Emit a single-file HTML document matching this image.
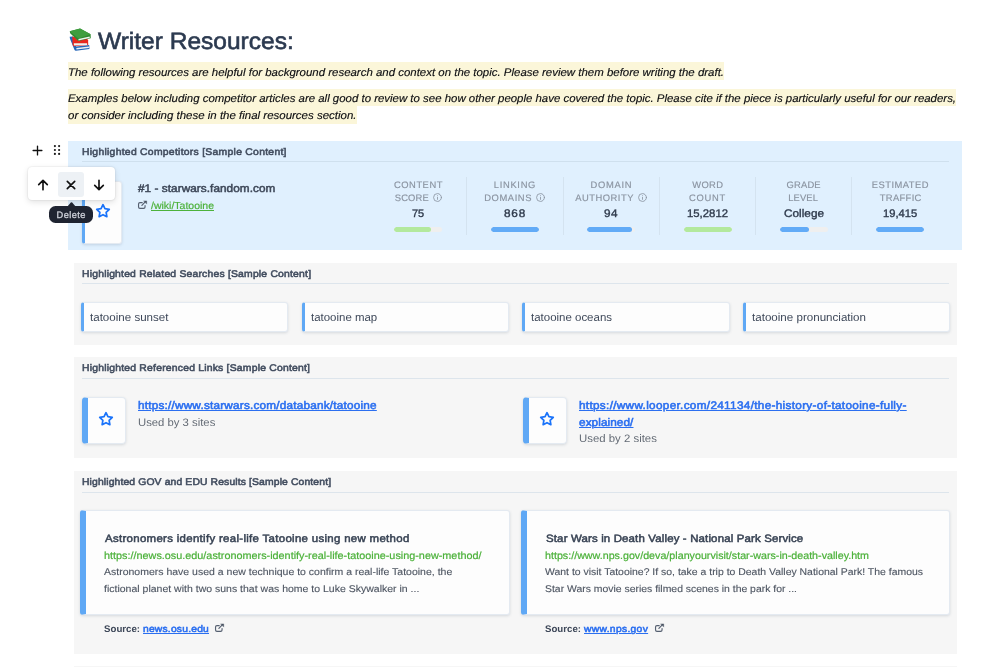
<!DOCTYPE html>
<html lang="en">
<head>
<meta charset="utf-8">
<title>Writer Resources</title>
<style>
*{box-sizing:border-box;margin:0;padding:0}
html,body{width:1000px;height:667px;overflow:hidden;background:#fff}
body{font-family:"Liberation Sans",sans-serif;color:#2d3748;position:relative;text-rendering:geometricPrecision}
#pg{position:absolute;left:0;top:0;width:1000px;height:667px;overflow:hidden;will-change:transform}
.abs{position:absolute;white-space:nowrap}
.hl{position:absolute;background:#fbf6d9}
.it{position:absolute;font-style:italic;color:#0c0d10;-webkit-text-stroke:0.15px #0c0d10;white-space:nowrap}
.sec{position:absolute;background:#f6f6f6}
.sec.blue{background:#e0f0fe}
.sh{position:absolute;color:#434e60;-webkit-text-stroke:0.55px #434e60;white-space:nowrap}
.hr{position:absolute;height:1px;background:#dde5ec}
.card{position:absolute;background:#fdfdfd;border:1px solid #e4eaf1;border-left:3px solid #5fa8f5;border-radius:3px;box-shadow:0 1px 3px rgba(40,60,90,.16)}
.card.w{border-left-width:6px;border-radius:4px}
.lbl{position:absolute;color:#8a93a0;-webkit-text-stroke:0.15px #8a93a0;text-transform:uppercase;white-space:nowrap}
.val{position:absolute;color:#2f3a4c;white-space:nowrap;-webkit-text-stroke:0.36px #2f3a4c}
.bar{position:absolute;height:4.6px;width:48px;border-radius:3px;background:#efefef;overflow:hidden}
.bar i{display:block;height:100%;border-radius:3px}
.vd{position:absolute;width:1px;background:#d4e3f0}
.lnk{color:#2b6ff0;-webkit-text-stroke:0.55px #2b6ff0;text-decoration:underline;text-decoration-thickness:0.8px;text-underline-offset:0.8px}
.grn{color:#4ab038;-webkit-text-stroke:0.2px #4ab038}
.dsc{color:#4d5561;-webkit-text-stroke:0.12px #4d5561}
</style>
</head>
<body>
<div id="pg">

<!-- title -->
<span class="abs" style="left:70px;top:40px;font-size:0;line-height:0">📚</span>
<svg class="abs" style="left:64px;top:24px" width="32" height="32" viewBox="0 0 667 667">
  <path d="M118 268 L185 262 L255 470 L525 440 L530 520 L250 556 Q225 556 215 530 L125 310Z" fill="#2566b8"/>
  <path d="M258 498 L520 468 L520 502 L258 530Z" fill="#eef0f2"/>
  <path d="M172 262 L470 300 Q500 310 502 340 L505 440 L210 462 Q185 462 180 430Z" fill="#e8281e"/>
  <path d="M205 402 L482 400 L482 440 L208 446Z" fill="#eef3f0"/>
  <path d="M120 150 L335 95 L555 212 L558 295 L300 352 Q285 352 275 335 L128 195Z" fill="#2f8a30"/>
  <path d="M120 150 L335 95 L555 212 L300 300Z" fill="#3f9e3e"/>
  <path d="M302 312 L535 262 L535 292 L302 346Z" fill="#eef3ee"/>
</svg>
<h1 class="abs" id="h1" style="top:25.90px;font-size:23.6px;line-height:32px;font-weight:400;color:#2c3a50;-webkit-text-stroke:0.6px #2c3a50;left:98.3px;letter-spacing:0.0px;transform:scaleX(1.0390);transform-origin:0 50%">Writer Resources:</h1>
<div class="hl" style="left:68px;top:62.2px;width:656px;height:17.6px"></div>
<div class="hl" style="left:68px;top:88.6px;width:888px;height:17.7px"></div>
<div class="hl" style="left:68px;top:106.2px;width:288.5px;height:17.6px"></div>
<p class="it" id="p1" style="top:64.51px;font-size:11.1px;line-height:17.6px;left:68.0px;letter-spacing:0.0px;transform:scaleX(1.0318);transform-origin:0 50%">The following resources are helpful for background research and context on the topic. Please review them before writing the draft.</p>
<p class="it" id="p2a" style="top:90.70px;font-size:11.1px;line-height:17.6px;left:68.0px;letter-spacing:-0.0px;transform:scaleX(1.0301);transform-origin:0 50%">Examples below including competitor articles are all good to review to see how other people have covered the topic. Please cite if the piece is particularly useful for our readers,</p>
<p class="it" id="p2b" style="top:108.31px;font-size:11.1px;line-height:17.6px;left:68.0px;letter-spacing:0.0px;transform:scaleX(1.0350);transform-origin:0 50%">or consider including these in the final resources section.</p>

<!-- section 1: competitors (selected) -->
<div class="sec blue" style="left:68px;top:140.5px;width:894px;height:109.8px"></div>
<div class="sh" id="sh1" style="top:145.51px;font-size:9.7px;line-height:14px;left:82.0px;letter-spacing:0.261px;transform:scaleX(1.0700);transform-origin:0 50%">Highlighted Competitors [Sample Content]</div>
<div class="hr" style="left:82px;top:161px;width:867px;background:#cfe0ee"></div>
<div class="card" style="left:81.8px;top:181px;width:40.6px;height:63px"></div>
<svg class="abs" style="left:95.2px;top:203px" width="16" height="16" viewBox="0 0 24 24" fill="none" stroke="#1a73fa" stroke-width="2.6" stroke-linejoin="round"><path d="M12 2.6l2.9 5.9 6.5.95-4.7 4.6 1.1 6.5L12 17.5l-5.8 3.05 1.1-6.5-4.7-4.6 6.5-.95z"/></svg>
<div class="abs" id="c1t" style="top:181.21px;font-size:11px;line-height:16px;color:#3d4758;-webkit-text-stroke:0.5px #3d4758;left:138.0px;letter-spacing:0.051px;transform:scaleX(1.0700);transform-origin:0 50%">#1 - starwars.fandom.com</div>
<svg class="abs" style="left:136.9px;top:200.4px" width="11" height="11" viewBox="0 0 11 11" fill="none" stroke="#566071" stroke-width="1.15" stroke-linecap="round" stroke-linejoin="round"><path d="M5.2 2.65H2.95a1.4 1.4 0 0 0-1.4 1.4v2.9a1.4 1.4 0 0 0 1.4 1.4h3.7a1.4 1.4 0 0 0 1.4-1.4V5.6"/><path d="M4.9 5.3L8.5 1.7" stroke-width="1.2"/><path d="M6.9 .9h2.8v2.8z" fill="#465060" stroke="#465060" stroke-width=".4"/></svg>
<div class="abs grn" id="c1l" style="top:199.71px;font-size:10.2px;line-height:14px;text-decoration:underline;text-decoration-thickness:1px;text-underline-offset:0.6px;-webkit-text-stroke:0.2px #4db23c;left:150.5px;letter-spacing:0.0px;transform:scaleX(1.0301);transform-origin:0 50%">/wiki/Tatooine</div>
<div class="lbl" id="l1a" style="top:177.70px;font-size:9.4px;line-height:13px;left:394.0px;letter-spacing:0.515px">Content</div>
<div class="lbl" id="l1b" style="top:191.41px;font-size:9.4px;line-height:13px;left:394.8px;letter-spacing:0.139px">Score</div>
<div class="val" id="v1" style="top:206.91px;font-size:11px;line-height:15px;left:412.3px;letter-spacing:0.0px;transform:scaleX(0.9959);transform-origin:0 50%">75</div>
<div class="bar" style="left:394.2px;top:227.4px"><i style="width:36.5px;background:#b3e99d"></i></div>
<div class="vd" style="left:466.2px;top:177px;height:57.5px"></div>
<div class="lbl" id="l2a" style="top:177.70px;font-size:9.4px;line-height:13px;left:493.8px;letter-spacing:0.681px">Linking</div>
<div class="lbl" id="l2b" style="top:191.41px;font-size:9.4px;line-height:13px;left:484.2px;letter-spacing:0.589px">Domains</div>
<div class="val" id="v2" style="top:206.91px;font-size:11px;line-height:15px;left:504.2px;letter-spacing:0.774px;transform:scaleX(1.0700);transform-origin:0 50%">868</div>
<div class="bar" style="left:490.7px;top:227.4px"><i style="width:48px;background:#62abf7"></i></div>
<div class="vd" style="left:562.7px;top:177px;height:57.5px"></div>
<div class="lbl" id="l3a" style="top:177.70px;font-size:9.4px;line-height:13px;left:590.5px;letter-spacing:0.72px">Domain</div>
<div class="lbl" id="l3b" style="top:191.41px;font-size:9.4px;line-height:13px;left:575.2px;letter-spacing:0.504px">Authority</div>
<div class="val" id="v3" style="top:206.91px;font-size:11px;line-height:15px;left:604.3px;letter-spacing:0.367px;transform:scaleX(1.0700);transform-origin:0 50%">94</div>
<div class="bar" style="left:586.9px;top:227.4px"><i style="width:45px;background:#62abf7"></i></div>
<div class="vd" style="left:659.2px;top:177px;height:57.5px"></div>
<div class="lbl" id="l4a" style="top:177.70px;font-size:9.4px;line-height:13px;left:692.2px;letter-spacing:0.371px">Word</div>
<div class="lbl" id="l4b" style="top:191.41px;font-size:9.4px;line-height:13px;left:689.0px;letter-spacing:0.714px">Count</div>
<div class="val" id="v4" style="top:206.91px;font-size:11px;line-height:15px;left:686.8px;letter-spacing:0.0px;transform:scaleX(1.0310);transform-origin:0 50%">15,2812</div>
<div class="bar" style="left:683.6px;top:227.4px"><i style="width:48px;background:#b3e99d"></i></div>
<div class="vd" style="left:755.3px;top:177px;height:57.5px"></div>
<div class="lbl" id="l5a" style="top:177.70px;font-size:9.4px;line-height:13px;left:786.6px;letter-spacing:0.164px">Grade</div>
<div class="lbl" id="l5b" style="top:191.41px;font-size:9.4px;line-height:13px;left:788.2px;letter-spacing:0.153px">Level</div>
<div class="val" id="v5" style="top:206.91px;font-size:11px;line-height:15px;left:783.8px;letter-spacing:0.012px;transform:scaleX(1.0700);transform-origin:0 50%">College</div>
<div class="bar" style="left:779.6px;top:227.4px"><i style="width:29px;background:#62abf7"></i></div>
<div class="vd" style="left:851.4px;top:177px;height:57.5px"></div>
<div class="lbl" id="l6a" style="top:177.70px;font-size:9.4px;line-height:13px;left:871.8px;letter-spacing:0.456px">Estimated</div>
<div class="lbl" id="l6b" style="top:191.41px;font-size:9.4px;line-height:13px;left:879.8px;letter-spacing:0.334px">Traffic</div>
<div class="val" id="v6" style="top:206.91px;font-size:11px;line-height:15px;left:883.0px;letter-spacing:0.0px;transform:scaleX(1.0162);transform-origin:0 50%">19,415</div>
<div class="bar" style="left:876.4px;top:227.4px"><i style="width:48px;background:#62abf7"></i></div>
<svg class="abs" style="left:432.8px;top:192.9px" width="9" height="9" viewBox="0 0 24 24" fill="none" stroke="#8d96a3" stroke-width="2.3" stroke-linecap="round"><circle cx="12" cy="12" r="10.5"/><path d="M12 11.5v5.5"/><path d="M12 7.2v.1"/></svg>
<svg class="abs" style="left:536.1px;top:192.9px" width="9" height="9" viewBox="0 0 24 24" fill="none" stroke="#8d96a3" stroke-width="2.3" stroke-linecap="round"><circle cx="12" cy="12" r="10.5"/><path d="M12 11.5v5.5"/><path d="M12 7.2v.1"/></svg>
<svg class="abs" style="left:637.8px;top:192.9px" width="9" height="9" viewBox="0 0 24 24" fill="none" stroke="#8d96a3" stroke-width="2.3" stroke-linecap="round"><circle cx="12" cy="12" r="10.5"/><path d="M12 11.5v5.5"/><path d="M12 7.2v.1"/></svg>

<!-- block toolbar -->
<svg class="abs" style="left:31.6px;top:144.5px" width="11" height="11" viewBox="0 0 12 12" stroke="#111" stroke-width="1.45" stroke-linecap="round"><path d="M6 1.2v9.6M1.2 6h9.6"/></svg>
<svg class="abs" style="left:53.1px;top:144.1px" width="8" height="12" viewBox="0 0 8 12" fill="#1a1a1a"><circle cx="1.9" cy="2.1" r="1.08"/><circle cx="6.1" cy="2.1" r="1.08"/><circle cx="1.9" cy="6" r="1.08"/><circle cx="6.1" cy="6" r="1.08"/><circle cx="1.9" cy="9.9" r="1.08"/><circle cx="6.1" cy="9.9" r="1.08"/></svg>
<div class="abs" style="left:27.9px;top:166.7px;width:86.9px;height:33.3px;background:#fff;border-radius:4px;box-shadow:0 2px 6px rgba(0,0,0,.12),0 0 2px rgba(0,0,0,.14)"></div>
<div class="abs" style="left:58.2px;top:171.8px;width:25.6px;height:25.5px;background:#edf1f5;border-radius:3px"></div>
<svg class="abs" style="left:37px;top:178.7px" width="12" height="12" viewBox="0 0 12 12" fill="none" stroke="#111" stroke-width="1.65" stroke-linecap="round" stroke-linejoin="round"><path d="M6 10.8V1.6M1.7 5.7L6 1.4l4.3 4.3"/></svg>
<svg class="abs" style="left:65.2px;top:178.8px" width="12" height="12" viewBox="0 0 12 12" fill="none" stroke="#111" stroke-width="1.65" stroke-linecap="round"><path d="M2.3 2.3l7.4 7.4M9.7 2.3l-7.4 7.4"/></svg>
<svg class="abs" style="left:93.2px;top:178.7px" width="12" height="12" viewBox="0 0 12 12" fill="none" stroke="#111" stroke-width="1.65" stroke-linecap="round" stroke-linejoin="round"><path d="M6 1.2v9.2M1.7 6.3L6 10.6l4.3-4.3"/></svg>
<svg class="abs" style="left:66.8px;top:202.2px" width="9" height="5" viewBox="0 0 9 5"><path d="M0 5L3.8 .6q.7-.7 1.4 0L9 5z" fill="#1f2431"/></svg>
<div class="abs" style="left:49.2px;top:205.6px;width:43.6px;height:17.3px;background:#1f2431;border-radius:6.5px"></div>
<div class="abs" id="tip" style="top:207.91px;font-size:9.3px;line-height:14px;color:#cdd0d9;-webkit-text-stroke:0.3px #cdd0d9;left:56.5px;letter-spacing:0.425px">Delete</div>

<!-- section 2: related searches -->
<div class="sec" style="left:73.6px;top:262.5px;width:883.4px;height:82.5px"></div>
<div class="sh" id="sh2" style="top:267.80px;font-size:9.7px;line-height:14px;left:82.0px;letter-spacing:0.189px;transform:scaleX(1.0700);transform-origin:0 50%">Highlighted Related Searches [Sample Content]</div>
<div class="hr" style="left:82px;top:283.2px;width:867px"></div>
<div class="card" style="left:81px;top:302.1px;width:207.4px;height:30px"></div>
<div class="abs" id="kw1" style="top:310.20px;font-size:11.4px;line-height:16px;color:#3d4758;left:90.0px;letter-spacing:0.0px;transform:scaleX(1.0160);transform-origin:0 50%">tatooine sunset</div>
<div class="card" style="left:301.7px;top:302.1px;width:207.4px;height:30px"></div>
<div class="abs" id="kw2" style="top:310.20px;font-size:11.4px;line-height:16px;color:#3d4758;left:310.8px;letter-spacing:0.0px;transform:scaleX(1.0052);transform-origin:0 50%">tatooine map</div>
<div class="card" style="left:522.2px;top:302.1px;width:207.4px;height:30px"></div>
<div class="abs" id="kw3" style="top:310.20px;font-size:11.4px;line-height:16px;color:#3d4758;left:531.0px;letter-spacing:-0.0px;transform:scaleX(1.0070);transform-origin:0 50%">tatooine oceans</div>
<div class="card" style="left:742.8px;top:302.1px;width:207.4px;height:30px"></div>
<div class="abs" id="kw4" style="top:310.20px;font-size:11.4px;line-height:16px;color:#3d4758;left:752.0px;letter-spacing:-0.0px;transform:scaleX(1.0170);transform-origin:0 50%">tatooine pronunciation</div>

<!-- section 3: referenced links -->
<div class="sec" style="left:73.6px;top:357px;width:883.4px;height:101.2px"></div>
<div class="sh" id="sh3" style="top:362.30px;font-size:9.7px;line-height:14px;left:82.0px;letter-spacing:0.204px;transform:scaleX(1.0700);transform-origin:0 50%">Highlighted Referenced Links [Sample Content]</div>
<div class="hr" style="left:82px;top:378px;width:867px"></div>
<div class="card w" style="left:81.6px;top:397px;width:44.1px;height:46.6px"></div>
<svg class="abs" style="left:97.8px;top:411px" width="16" height="16" viewBox="0 0 24 24" fill="none" stroke="#1a73fa" stroke-width="2.6" stroke-linejoin="round"><path d="M12 2.6l2.9 5.9 6.5.95-4.7 4.6 1.1 6.5L12 17.5l-5.8 3.05 1.1-6.5-4.7-4.6 6.5-.95z"/></svg>
<div class="abs lnk" id="r1" style="top:398.21px;font-size:11px;line-height:16px;left:137.7px;letter-spacing:0.19px;transform:scaleX(1.0700);transform-origin:0 50%">https://www.starwars.com/databank/tatooine</div>
<div class="abs" id="r1u" style="top:414.71px;font-size:10.9px;line-height:16px;color:#646b75;left:137.7px;letter-spacing:0.0px;transform:scaleX(1.0382);transform-origin:0 50%">Used by 3 sites</div>
<div class="card w" style="left:522.6px;top:397px;width:44.1px;height:46.6px"></div>
<svg class="abs" style="left:538.8px;top:411px" width="16" height="16" viewBox="0 0 24 24" fill="none" stroke="#1a73fa" stroke-width="2.6" stroke-linejoin="round"><path d="M12 2.6l2.9 5.9 6.5.95-4.7 4.6 1.1 6.5L12 17.5l-5.8 3.05 1.1-6.5-4.7-4.6 6.5-.95z"/></svg>
<div class="abs lnk" id="r2a" style="top:398.21px;font-size:11px;line-height:16px;left:578.6px;letter-spacing:0.288px;transform:scaleX(1.0700);transform-origin:0 50%">https://www.looper.com/241134/the-history-of-tatooine-fully-</div>
<div class="abs lnk" id="r2b" style="top:414.61px;font-size:11px;line-height:16px;left:578.6px;letter-spacing:0.076px;transform:scaleX(1.0700);transform-origin:0 50%">explained/</div>
<div class="abs" id="r2u" style="top:431.00px;font-size:10.9px;line-height:16px;color:#646b75;left:578.6px;letter-spacing:0.0px;transform:scaleX(1.0463);transform-origin:0 50%">Used by 2 sites</div>

<!-- section 4: gov and edu -->
<div class="sec" style="left:73.6px;top:470.8px;width:883.4px;height:183.4px"></div>
<div class="sh" id="sh4" style="top:476.30px;font-size:9.7px;line-height:14px;left:82.0px;letter-spacing:0.117px;transform:scaleX(1.0700);transform-origin:0 50%">Highlighted GOV and EDU Results [Sample Content]</div>
<div class="hr" style="left:82px;top:492.1px;width:867px"></div>
<div class="card w" style="left:80px;top:510.3px;width:429.7px;height:104.7px;border-radius:3px"></div>
<div class="abs" id="g1t" style="top:530.81px;font-size:10.7px;line-height:16px;color:#384354;-webkit-text-stroke:0.5px #384354;left:104.9px;letter-spacing:0.292px;transform:scaleX(1.0700);transform-origin:0 50%">Astronomers identify real-life Tatooine using new method</div>
<div class="abs grn" id="g1u" style="top:549.61px;font-size:10.3px;line-height:14px;left:104.3px;letter-spacing:0.0px;transform:scaleX(1.0519);transform-origin:0 50%">https://news.osu.edu/astronomers-identify-real-life-tatooine-using-new-method/</div>
<div class="abs dsc" id="g1a" style="top:565.81px;font-size:9.8px;line-height:14px;left:104.3px;letter-spacing:0.007px;transform:scaleX(1.0700);transform-origin:0 50%">Astronomers have used a new technique to confirm a real-life Tatooine, the</div>
<div class="abs dsc" id="g1b" style="top:583.01px;font-size:9.8px;line-height:14px;left:104.3px;letter-spacing:0.01px;transform:scaleX(1.0700);transform-origin:0 50%">fictional planet with two suns that was home to Luke Skywalker in ...</div>
<div class="abs" id="s1a" style="top:623.10px;font-size:9.6px;line-height:14px;font-weight:700;color:#3d4758;left:103.7px;letter-spacing:0.0px;transform:scaleX(1.0102);transform-origin:0 50%">Source:</div>
<div class="abs lnk" id="s1b" style="top:623.10px;font-size:9.6px;line-height:14px;left:143.0px;letter-spacing:0.208px;transform:scaleX(1.0700);transform-origin:0 50%">news.osu.edu</div>
<svg class="abs" style="left:214.1px;top:623.2px" width="11" height="11" viewBox="0 0 11 11" fill="none" stroke="#566071" stroke-width="1.15" stroke-linecap="round" stroke-linejoin="round"><path d="M5.2 2.65H2.95a1.4 1.4 0 0 0-1.4 1.4v2.9a1.4 1.4 0 0 0 1.4 1.4h3.7a1.4 1.4 0 0 0 1.4-1.4V5.6"/><path d="M4.9 5.3L8.5 1.7" stroke-width="1.2"/><path d="M6.9 .9h2.8v2.8z" fill="#465060" stroke="#465060" stroke-width=".4"/></svg>
<div class="card w" style="left:521.2px;top:510.3px;width:429px;height:104.7px;border-radius:3px"></div>
<div class="abs" id="g2t" style="top:530.81px;font-size:10.7px;line-height:16px;color:#384354;-webkit-text-stroke:0.5px #384354;left:545.6px;letter-spacing:0.145px;transform:scaleX(1.0700);transform-origin:0 50%">Star Wars in Death Valley - National Park Service</div>
<div class="abs grn" id="g2u" style="top:549.61px;font-size:10.3px;line-height:14px;left:545.0px;letter-spacing:0.0px;transform:scaleX(1.0395);transform-origin:0 50%">https://www.nps.gov/deva/planyourvisit/star-wars-in-death-valley.htm</div>
<div class="abs dsc" id="g2a" style="top:565.81px;font-size:9.8px;line-height:14px;left:545.0px;letter-spacing:0.0px;transform:scaleX(1.0657);transform-origin:0 50%">Want to visit Tatooine? If so, take a trip to Death Valley National Park! The famous</div>
<div class="abs dsc" id="g2b" style="top:583.01px;font-size:9.8px;line-height:14px;left:545.0px;letter-spacing:-0.0px;transform:scaleX(1.0632);transform-origin:0 50%">Star Wars movie series filmed scenes in the park for ...</div>
<div class="abs" id="s2a" style="top:623.10px;font-size:9.6px;line-height:14px;font-weight:700;color:#3d4758;left:544.6px;letter-spacing:0.0px;transform:scaleX(1.0074);transform-origin:0 50%">Source:</div>
<div class="abs lnk" id="s2b" style="top:623.10px;font-size:9.6px;line-height:14px;left:584.2px;letter-spacing:0.309px;transform:scaleX(1.0700);transform-origin:0 50%">www.nps.gov</div>
<svg class="abs" style="left:653.7px;top:623.2px" width="11" height="11" viewBox="0 0 11 11" fill="none" stroke="#566071" stroke-width="1.15" stroke-linecap="round" stroke-linejoin="round"><path d="M5.2 2.65H2.95a1.4 1.4 0 0 0-1.4 1.4v2.9a1.4 1.4 0 0 0 1.4 1.4h3.7a1.4 1.4 0 0 0 1.4-1.4V5.6"/><path d="M4.9 5.3L8.5 1.7" stroke-width="1.2"/><path d="M6.9 .9h2.8v2.8z" fill="#465060" stroke="#465060" stroke-width=".4"/></svg>

<!-- next section peeking -->
<div class="sec" style="left:73.6px;top:665.8px;width:883.4px;height:10px"></div>

</div>
</body>
</html>
